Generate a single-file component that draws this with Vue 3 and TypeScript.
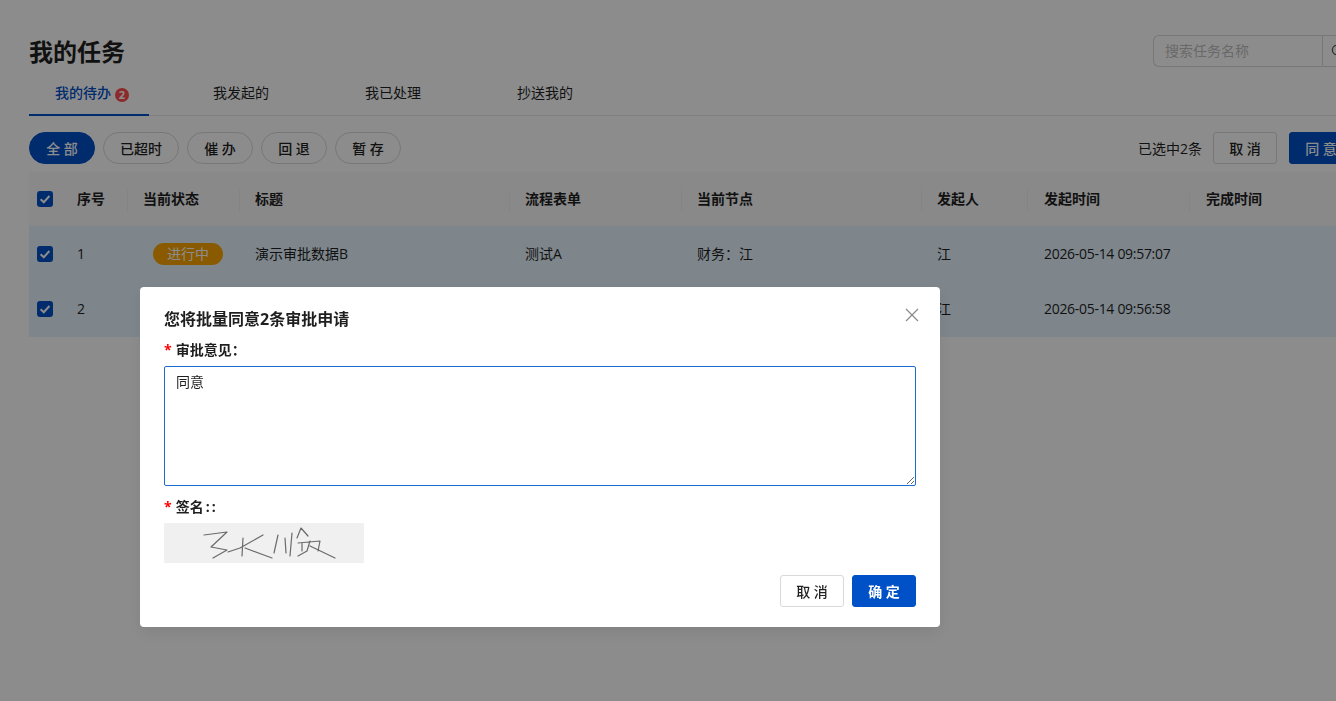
<template>
  <div class="page">
    <div class="head">
      <h1 class="title">我的任务</h1>
      <div class="search">
        <div class="search-input">搜索任务名称</div>
        <button class="search-btn">
          <svg width="14" height="14" viewBox="0 0 14 14" fill="none" stroke="#595959" stroke-width="1.3">
            <circle cx="6" cy="6" r="4.6" />
            <path d="M9.4 9.4 13 13" />
          </svg>
        </button>
      </div>
    </div>

    <div class="tabs">
      <div class="tab active">我的待办<span class="badge">2</span></div>
      <div v-for="t in otherTabs" :key="t" class="tab">{{ t }}</div>
    </div>

    <div class="toolbar">
      <div class="pills">
        <button v-for="(p, i) in pills" :key="p" class="pill" :class="{ on: i === 0 }">{{ p }}</button>
      </div>
      <div class="actions">
        <span class="picked">已选中2条</span>
        <button class="btn">取 消</button>
        <button class="btn primary">同 意</button>
      </div>
    </div>

    <table class="grid">
      <colgroup>
        <col v-for="(w, i) in colWidths" :key="i" :style="{ width: w + 'px' }" />
      </colgroup>
      <thead>
        <tr>
          <th class="check-cell"><span class="check"><svg viewBox="0 0 16 16"><path d="M3.6 8.2 6.8 11.2 12.4 5" /></svg></span></th>
          <th v-for="h in headers" :key="h">{{ h }}</th>
        </tr>
      </thead>
      <tbody>
        <tr v-for="r in rows" :key="r.no">
          <td class="check-cell"><span class="check"><svg viewBox="0 0 16 16"><path d="M3.6 8.2 6.8 11.2 12.4 5" /></svg></span></td>
          <td>{{ r.no }}</td>
          <td><span v-if="r.status" class="status">{{ r.status }}</span></td>
          <td>{{ r.title }}</td>
          <td>{{ r.form }}</td>
          <td>{{ r.node }}</td>
          <td>{{ r.user }}</td>
          <td class="time">{{ r.time }}</td>
          <td></td>
        </tr>
      </tbody>
    </table>
  </div>

  <div class="mask">
    <div class="modal">
      <svg class="close" width="14" height="14" viewBox="0 0 14 14" stroke="#8c8c8c" stroke-width="1.3" fill="none">
        <path d="M1 1 13 13M13 1 1 13" />
      </svg>
      <div class="modal-title">您将批量同意2条审批申请</div>
      <label class="label"><i>*</i>审批意见：</label>
      <textarea v-model="opinion" class="opinion"></textarea>
      <label class="label second"><i>*</i>签名<span class="colons">::</span></label>
      <div class="sign">
        <svg width="200" height="40" viewBox="0 0 200 40" fill="none" stroke="#6a6a6a" stroke-width="1.2" stroke-linecap="round" stroke-linejoin="round">
          <path d="M40 12 63 9 47 24 63 27 49 35" />
          <path d="M79 15 78 33M64 29 76 25 99 12M81 25 108 35" />
          <path d="M114 12 110 30M121 15 122 30" />
          <path d="M128 10 126 33M133 15 137 5 144 13M134 20 156 18 154 28M138 20V28M146 18 143 28 134 33M146 23 171 35" />
        </svg>
      </div>
      <div class="modal-foot">
        <button class="btn">取 消</button>
        <button class="btn confirm">确 定</button>
      </div>
    </div>
  </div>
</template>

<script setup lang="ts">
import { ref } from 'vue'

const otherTabs = ['我发起的', '我已处理', '抄送我的']
const pills = ['全 部', '已超时', '催 办', '回 退', '暂 存']
const colWidths = [32, 66, 112, 270, 172, 240, 106, 162, 147]
const headers = ['序号', '当前状态', '标题', '流程表单', '当前节点', '发起人', '发起时间', '完成时间']

// the second row is mostly covered by the dialog
const rows = [
  { no: 1, status: '进行中', title: '演示审批数据B', form: '测试A', node: '财务：江', user: '江', time: '2026-05-14 09:57:07' },
  { no: 2, status: '', title: '', form: '', node: '', user: '江', time: '2026-05-14 09:56:58' }
]

const opinion = ref('同意')
</script>

<style>
html, body {
  margin: 0;
  height: 100%;
  overflow: hidden;
  background: #fff;
}
</style>

<style scoped>
.page {
  width: 1353px;
  padding: 36px 0 0 29px;
  box-sizing: border-box;
  font-family: "Open Sans", "Noto Sans CJK SC", sans-serif;
  font-size: 14px;
  color: #1f1f1f;
}

button {
  font-family: inherit;
  cursor: pointer;
}

.head {
  display: flex;
  justify-content: space-between;
  align-items: center;
  height: 32px;
}

.title {
  margin: 0;
  font-size: 24px;
  font-weight: 700;
  line-height: 32px;
}

.search {
  display: flex;
  height: 32px;
  margin-top: -2px;
  width: 200px;
}

.search-input {
  flex: 1;
  border: 1px solid #d9d9d9;
  border-right: 0;
  border-radius: 6px 0 0 6px;
  padding-left: 11px;
  line-height: 30px;
  color: #bfbfbf;
}

.search-btn {
  width: 31px;
  border: 1px solid #d9d9d9;
  border-radius: 0 6px 6px 0;
  background: #fff;
  padding: 0;
  display: flex;
  align-items: center;
  justify-content: center;
}

.tabs {
  display: flex;
  height: 48px;
  margin-right: -20px;
  border-bottom: 1px solid #e8e8e8;
  box-sizing: border-box;
}

.tab {
  width: 152px;
  text-align: center;
  line-height: 50px;
}

.tab.active {
  width: 120px;
  margin-right: 16px;
  padding-left: 26px;
  box-sizing: border-box;
  text-align: left;
  color: #0050c8;
  font-weight: 500;
  border-bottom: 2px solid #0050c8;
  height: 48px;
}

.badge {
  display: inline-block;
  width: 14px;
  height: 14px;
  margin-left: 4px;
  border-radius: 50%;
  background: #ff4d4f;
  color: #fff;
  font-size: 11px;
  font-weight: 700;
  line-height: 14px;
  text-align: center;
  vertical-align: -1px;
}

.toolbar {
  display: flex;
  justify-content: space-between;
  align-items: center;
  margin-top: 16px;
  height: 32px;
}

.pills {
  display: flex;
  gap: 8px;
}

.pill {
  height: 32px;
  min-width: 66px;
  padding: 0 16px;
  border: 1px solid #d9d9d9;
  border-radius: 16px;
  background: #fff;
  color: #1f1f1f;
  font-size: 14px;
  font-weight: 500;
}

.pill.on {
  background: #0050c8;
  border-color: #0050c8;
  color: #fff;
}

.actions {
  display: flex;
  align-items: center;
}

.picked {
  margin-right: 11px;
}

.actions .btn + .btn {
  margin-left: 12px;
}

.btn {
  width: 64px;
  height: 32px;
  padding: 0;
  border: 1px solid #d9d9d9;
  border-radius: 3px;
  background: #fff;
  color: #1f1f1f;
  font-size: 14px;
  font-weight: 500;
}

.btn.primary,
.btn.confirm {
  background: #0050c8;
  border-color: #0050c8;
  color: #fff;
}

.btn.confirm {
  font-weight: 700;
}

.grid {
  margin-top: 8px;
  width: 1307px;
  table-layout: fixed;
  border-collapse: collapse;
}

th {
  height: 54px;
  padding: 0 16px 2px;
  box-sizing: border-box;
  background: #fafafa;
  text-align: left;
  font-weight: 700;
  position: relative;
}

th:nth-child(n + 8) {
  padding-left: 17px;
}

th + th + th::before {
  content: "";
  position: absolute;
  left: 0;
  top: 18px;
  height: 22px;
  width: 1px;
  background: #f0f0f0;
}

td {
  padding: 0 16px 1px;
  background: #e6f4ff;
  height: 55px;
  box-sizing: border-box;
}

tbody tr:last-child td {
  height: 56px;
  padding-bottom: 2px;
}

td.time {
  padding-left: 17px;
  white-space: nowrap;
  letter-spacing: -0.3px;
}

th.check-cell {
  padding: 0 0 0 8px;
}

td.check-cell {
  padding: 1px 0 0 8px;
}

tbody tr:last-child td.check-cell {
  padding-bottom: 1px;
}

.check {
  display: block;
  width: 16px;
  height: 16px;
  border-radius: 3px;
  background: #0050c8;
}

.check svg {
  display: block;
  fill: none;
  stroke: #fff;
  stroke-width: 2;
}

.status {
  display: block;
  width: 70px;
  margin: 2px 0 0 10px;
  height: 22px;
  line-height: 22px;
  border-radius: 11px;
  background: #faa500;
  color: #fff;
  text-align: center;
}

.mask {
  position: fixed;
  inset: 0;
  background: rgba(0, 0, 0, 0.45);
  font-family: "Open Sans", "Noto Sans CJK SC", sans-serif;
  font-size: 14px;
  color: #1f1f1f;
}

.modal {
  position: absolute;
  left: 140px;
  top: 287px;
  width: 800px;
  height: 340px;
  box-sizing: border-box;
  padding: 21px 24px 20px;
  background: #fff;
  border-radius: 4px;
  box-shadow: 0 6px 16px rgba(0, 0, 0, 0.08);
  display: flex;
  flex-direction: column;
}

.close {
  position: absolute;
  right: 21px;
  top: 21px;
}

.modal-title {
  font-size: 16px;
  font-weight: 700;
  line-height: 22px;
}

.label {
  display: block;
  margin-top: 9px;
  line-height: 22px;
  font-weight: 700;
}

.label i {
  font-style: normal;
  font-weight: 700;
  color: #f00;
  margin-right: 4px;
}

.label.second {
  margin-top: 10px;
}

.colons {
  margin-left: 2px;
  letter-spacing: 2px;
}

.opinion {
  display: block;
  box-sizing: border-box;
  width: 752px;
  height: 120px;
  margin-top: 5px;
  padding: 4px 11px;
  border: 1px solid #1a6dd0;
  border-radius: 2px;
  outline: none;
  font: inherit;
  color: #1f1f1f;
}

.sign {
  width: 200px;
  height: 40px;
  margin-top: 5px;
  background: #f0f0f0;
}

.sign svg {
  display: block;
  filter: blur(0.35px);
}

.modal-foot {
  display: flex;
  justify-content: flex-end;
  gap: 8px;
  margin-top: auto;
}
</style>
